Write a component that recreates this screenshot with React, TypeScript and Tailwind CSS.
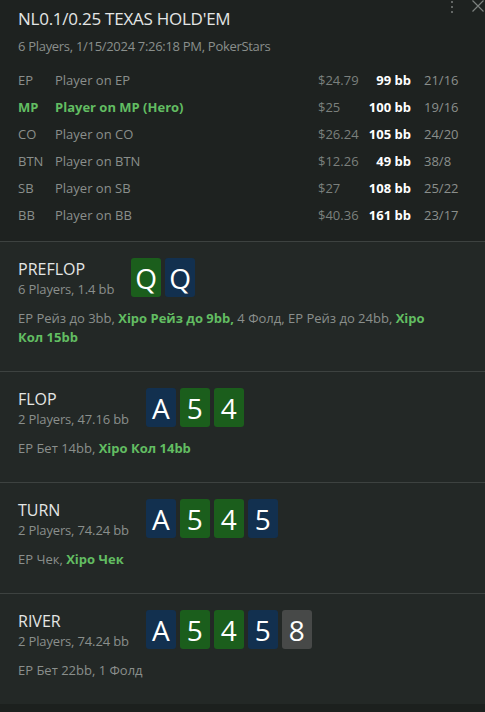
import React from "react";

type Seat = {
  pos: string;
  name: string;
  money: string;
  bb: string;
  stat: string;
  hero?: boolean;
};

type Suit = "g" | "b" | "x";

type Street = {
  title: string;
  info: string;
  cards: [string, Suit][];
  actions: [string, boolean][];
};

const seats: Seat[] = [
  { pos: "EP", name: "Player on EP", money: "$24.79", bb: "99 bb", stat: "21/16" },
  { pos: "MP", name: "Player on MP (Hero)", money: "$25", bb: "100 bb", stat: "19/16", hero: true },
  { pos: "CO", name: "Player on CO", money: "$26.24", bb: "105 bb", stat: "24/20" },
  { pos: "BTN", name: "Player on BTN", money: "$12.26", bb: "49 bb", stat: "38/8" },
  { pos: "SB", name: "Player on SB", money: "$27", bb: "108 bb", stat: "25/22" },
  { pos: "BB", name: "Player on BB", money: "$40.36", bb: "161 bb", stat: "23/17" },
];

const streets: Street[] = [
  {
    title: "PREFLOP",
    info: "6 Players, 1.4 bb",
    cards: [
      ["Q", "g"],
      ["Q", "b"],
    ],
    actions: [
      ["EP Рейз до 3bb, ", false],
      ["Хіро Рейз до 9bb,", true],
      [" 4 Фолд, EP Рейз до 24bb, ", false],
      ["Хіро ", true],
      ["Кол 15bb", true],
    ],
  },
  {
    title: "FLOP",
    info: "2 Players, 47.16 bb",
    cards: [
      ["A", "b"],
      ["5", "g"],
      ["4", "g"],
    ],
    actions: [
      ["EP Бет 14bb, ", false],
      ["Хіро Кол 14bb", true],
    ],
  },
  {
    title: "TURN",
    info: "2 Players, 74.24 bb",
    cards: [
      ["A", "b"],
      ["5", "g"],
      ["4", "g"],
      ["5", "b"],
    ],
    actions: [
      ["EP Чек, ", false],
      ["Хіро Чек", true],
    ],
  },
  {
    title: "RIVER",
    info: "2 Players, 74.24 bb",
    cards: [
      ["A", "b"],
      ["5", "g"],
      ["4", "g"],
      ["5", "b"],
      ["8", "x"],
    ],
    actions: [["EP Бет 22bb, 1 Фолд", false]],
  },
];

const suitBg: Record<Suit, string> = {
  g: "bg-[#1b5e1c]",
  b: "bg-[#12304f]",
  x: "bg-[#474948]",
};

function PlayingCard({ rank, suit }: { rank: string; suit: Suit }) {
  return (
    <div
      className={`flex h-[39px] w-[30px] items-center justify-center rounded-[3px] text-[28px] leading-none text-white ${suitBg[suit]}`}
    >
      {rank}
    </div>
  );
}

function StreetBlock({ street }: { street: Street }) {
  return (
    <div className="border-t border-[#3d4240] bg-[#232826] pt-[16px] pb-[24px]">
      <div className="flex items-start gap-[17px] pl-[18px]">
        <div className="flex flex-col">
          <p className="text-[16px] leading-[22px] text-[#e4e6e5]">{street.title}</p>
          <p className="text-[13px] leading-[18px] tracking-[-0.15px] text-[#8a8f8c]">{street.info}</p>
        </div>
        <div className="flex gap-[4px]">
          {street.cards.map(([r, s], i) => (
            <PlayingCard key={i} rank={r} suit={s} />
          ))}
        </div>
      </div>
      <p className="mt-[11px] pl-[18px] pr-[45px] text-[13px] leading-[19px] text-[#8a8f8c]">
        {street.actions.map(([t, hero], i) =>
          hero ? (
            <span key={i} className="font-bold text-[#62bd62]">
              {t}
            </span>
          ) : (
            <span key={i}>{t}</span>
          )
        )}
      </p>
    </div>
  );
}

export default function App() {
  return (
    <div
      className="min-h-screen w-[485px] bg-[#1c201e]"
      style={{ fontFamily: '"Open Sans", "Noto Sans", sans-serif' }}
    >
      <div className="relative bg-[#1e2220] pt-[6px] pb-[12px]">
        {/* menu + close, partly scrolled out of view */}
        <div className="absolute right-[1px] top-0 flex items-start gap-[19px] text-[#7c817e]">
          <div className="flex flex-col gap-[3px] pt-[1px]">
            <span className="h-[2px] w-[2px] rounded-full bg-[#7c817e]" />
            <span className="h-[2px] w-[2px] rounded-full bg-[#7c817e]" />
            <span className="h-[2px] w-[2px] rounded-full bg-[#7c817e]" />
          </div>
          <svg width="12" height="12" viewBox="0 0 12 12" fill="none" stroke="currentColor" strokeWidth="1.2">
            <path d="M0.5 0.5 L11.5 11.5 M11.5 0.5 L0.5 11.5" />
          </svg>
        </div>
        <h1 className="pl-[18px] text-[17px] leading-[26px] tracking-[-0.25px] text-[#e4e6e5]">
          NL0.1/0.25 TEXAS HOLD'EM
        </h1>
        <p className="mt-[4px] pl-[18px] text-[13px] leading-[20px] tracking-[-0.3px] text-[#8a8f8c]">
          6 Players, 1/15/2024 7:26:18 PM, PokerStars
        </p>
        <div className="mt-[11px] flex flex-col">
          {seats.map((s) => (
            <div key={s.pos} className="flex h-[27px] items-center whitespace-nowrap pl-[18px] text-[13px]">
              <span className={`w-[37px] ${s.hero ? "font-bold text-[#62bd62]" : "text-[#8a8f8c]"}`}>{s.pos}</span>
              <span className={`flex-1 ${s.hero ? "font-bold text-[#62bd62]" : "text-[#8a8f8c]"}`}>{s.name}</span>
              <span className="w-[44px] text-[#7b807d]">{s.money}</span>
              <span className="flex w-[49px] justify-end font-bold text-white">{s.bb}</span>
              <span className="w-[74px] pl-[13px] text-[#8a8f8c]">{s.stat}</span>
            </div>
          ))}
        </div>
      </div>
      {streets.map((st) => (
        <StreetBlock key={st.title} street={st} />
      ))}
    </div>
  );
}
